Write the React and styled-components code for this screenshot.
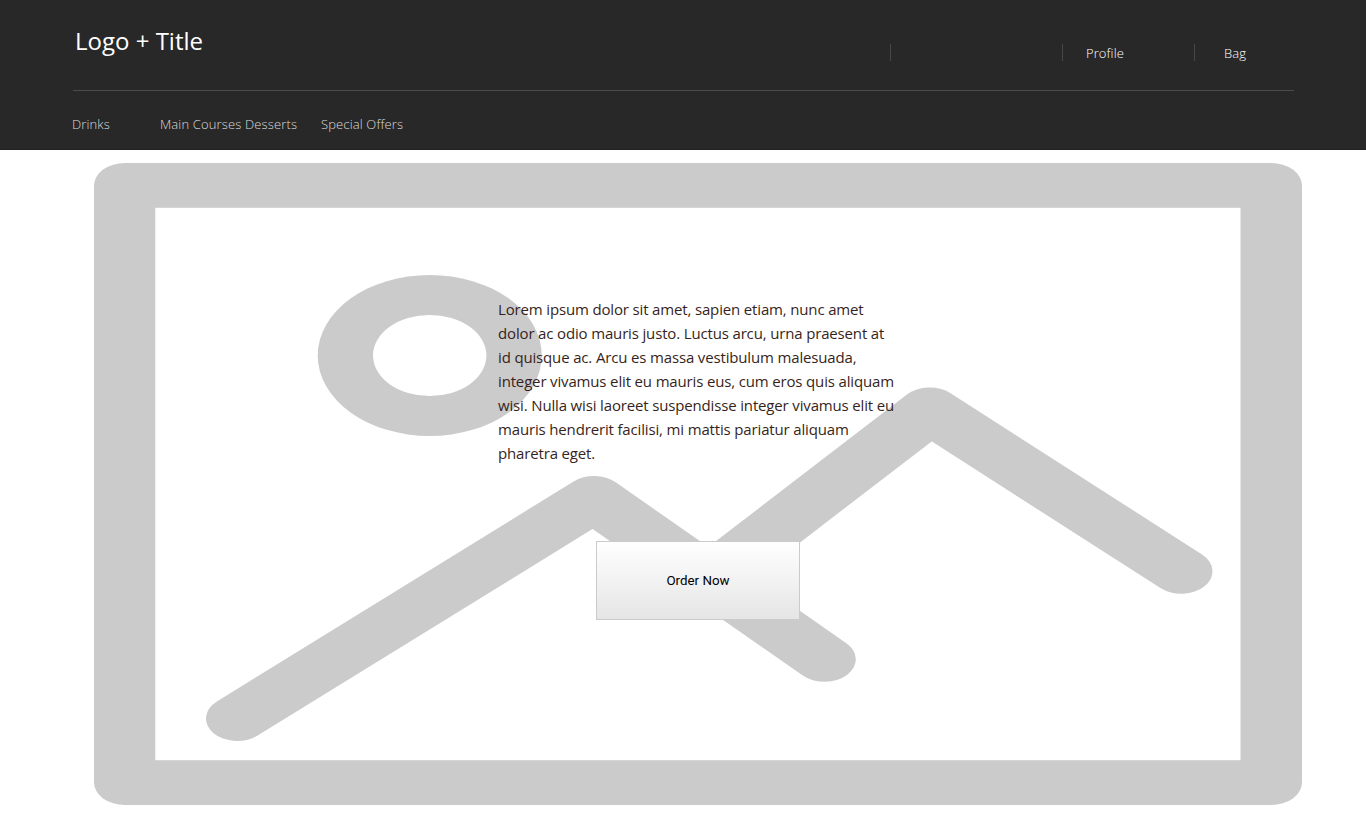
import React from "react";
import styled, { createGlobalStyle } from "styled-components";

const GlobalStyle = createGlobalStyle`
  * { box-sizing: border-box; }
  body { margin: 0; background: #fff; overflow: hidden; font-family: "Open Sans", sans-serif; }
`;

const Page = styled.div`
  width: 1366px;
  height: 838px;
`;

const Header = styled.header`
  height: 150px;
  padding: 0 72px 0 73px;
  background: #282828;
  border-bottom: 1px solid #222;
`;

const TopBar = styled.div`
  display: flex;
  justify-content: space-between;
  height: 91px;
  border-bottom: 1px solid #4b4b4b;
`;

const Title = styled.h1`
  margin: 24px 0 0 2px;
  font-size: 24px;
  line-height: 34px;
  font-weight: 400;
  color: #fff;
  white-space: nowrap;
`;

const Account = styled.div`
  display: flex;
  height: 17px;
  margin-top: 44px;
`;

const AccountItem = styled.a`
  width: ${(p) => p.$width}px;
  padding-left: ${(p) => p.$indent}px;
  border-left: 1px solid #4a4646;
  font-size: 13px;
  line-height: 19px;
  font-weight: 300;
  letter-spacing: 0.1px;
  color: #fff;
`;

const Nav = styled.nav`
  display: flex;
  margin-left: -1px;
  padding-top: 23px;
`;

const NavItem = styled.a`
  width: ${(p) => p.$width}px;
  font-size: 13px;
  line-height: 20px;
  font-weight: 300;
  letter-spacing: 0.13px;
  color: #dcdcdc;
  white-space: nowrap;
`;

const Hero = styled.main`
  display: grid;
  width: 1208px;
  height: 642px;
  margin: 13px 0 0 94px;
`;

const Placeholder = styled.svg`
  grid-area: 1 / 1;
  display: block;
`;

const HeroContent = styled.div`
  grid-area: 1 / 1;
  z-index: 1;
  display: flex;
  flex-direction: column;
  padding: 134px 0 0 404px;
`;

const Copy = styled.p`
  margin: 0;
  font-size: 15px;
  line-height: 24px;
  letter-spacing: -0.155px;
  color: #371f20;
  white-space: nowrap;
`;

const OrderButton = styled.button`
  width: 204px;
  height: 79px;
  margin: 76px 0 0 98px;
  padding: 0;
  border: 1px solid #cbcbcb;
  border-radius: 0;
  background: linear-gradient(#fff, #e5e5e5);
  font: 400 13.333px Roboto, Arial, sans-serif;
  color: #000;
`;

const account = [
  { label: "", width: 172, indent: 23 },
  { label: "Profile", width: 132, indent: 23 },
  { label: "Bag", width: 100, indent: 29 },
];

const nav = [
  { label: "Drinks", width: 88 },
  { label: "Main Courses", width: 85 },
  { label: "Desserts", width: 76 },
  { label: "Special Offers", width: 90 },
];

const copy = [
  "Lorem ipsum dolor sit amet, sapien etiam, nunc amet",
  "dolor ac odio mauris justo. Luctus arcu, urna praesent at",
  "id quisque ac. Arcu es massa vestibulum malesuada,",
  "integer vivamus elit eu mauris eus, cum eros quis aliquam",
  "wisi. Nulla wisi laoreet suspendisse integer vivamus elit eu",
  "mauris hendrerit facilisi, mi mattis pariatur aliquam",
  "pharetra eget.",
];

function ImagePlaceholder() {
  return (
    <Placeholder width="1208" height="642" viewBox="94 163 1208 642" aria-hidden="true">
      <rect x="94" y="163" width="1208" height="642" rx="31" ry="22.5" fill="#cbcbcb" />
      <rect x="155.3" y="207.8" width="1085.2" height="552.4" fill="#fff" />
      <g fill="none" stroke="#cbcbcb" strokeLinecap="round" strokeLinejoin="round">
        <ellipse cx="429.7" cy="355.5" rx="112" ry="80.5" fill="#cbcbcb" stroke="none" />
        <ellipse cx="429.7" cy="355.5" rx="56.7" ry="40.6" fill="#fff" stroke="none" />
        <g transform="scale(1.39 1)" strokeWidth="45">
          <path d="M170.7 718.5 427.3 498.5 593.2 659.3" />
          <path d="M517.5 571.5 668.9 410 849.8 571.3" />
        </g>
      </g>
    </Placeholder>
  );
}

export default function App() {
  return (
    <Page>
      <GlobalStyle />
      <Header>
        <TopBar>
          <Title>Logo + Title</Title>
          <Account>
            {account.map((a) => (
              <AccountItem key={a.label} $width={a.width} $indent={a.indent}>{a.label}</AccountItem>
            ))}
          </Account>
        </TopBar>
        <Nav>
          {nav.map((n) => (
            <NavItem key={n.label} $width={n.width}>{n.label}</NavItem>
          ))}
        </Nav>
      </Header>
      <Hero>
        <ImagePlaceholder />
        <HeroContent>
          <Copy>
            {copy.map((line) => (
              <React.Fragment key={line}>{line}<br /></React.Fragment>
            ))}
          </Copy>
          <OrderButton>Order Now</OrderButton>
        </HeroContent>
      </Hero>
    </Page>
  );
}
